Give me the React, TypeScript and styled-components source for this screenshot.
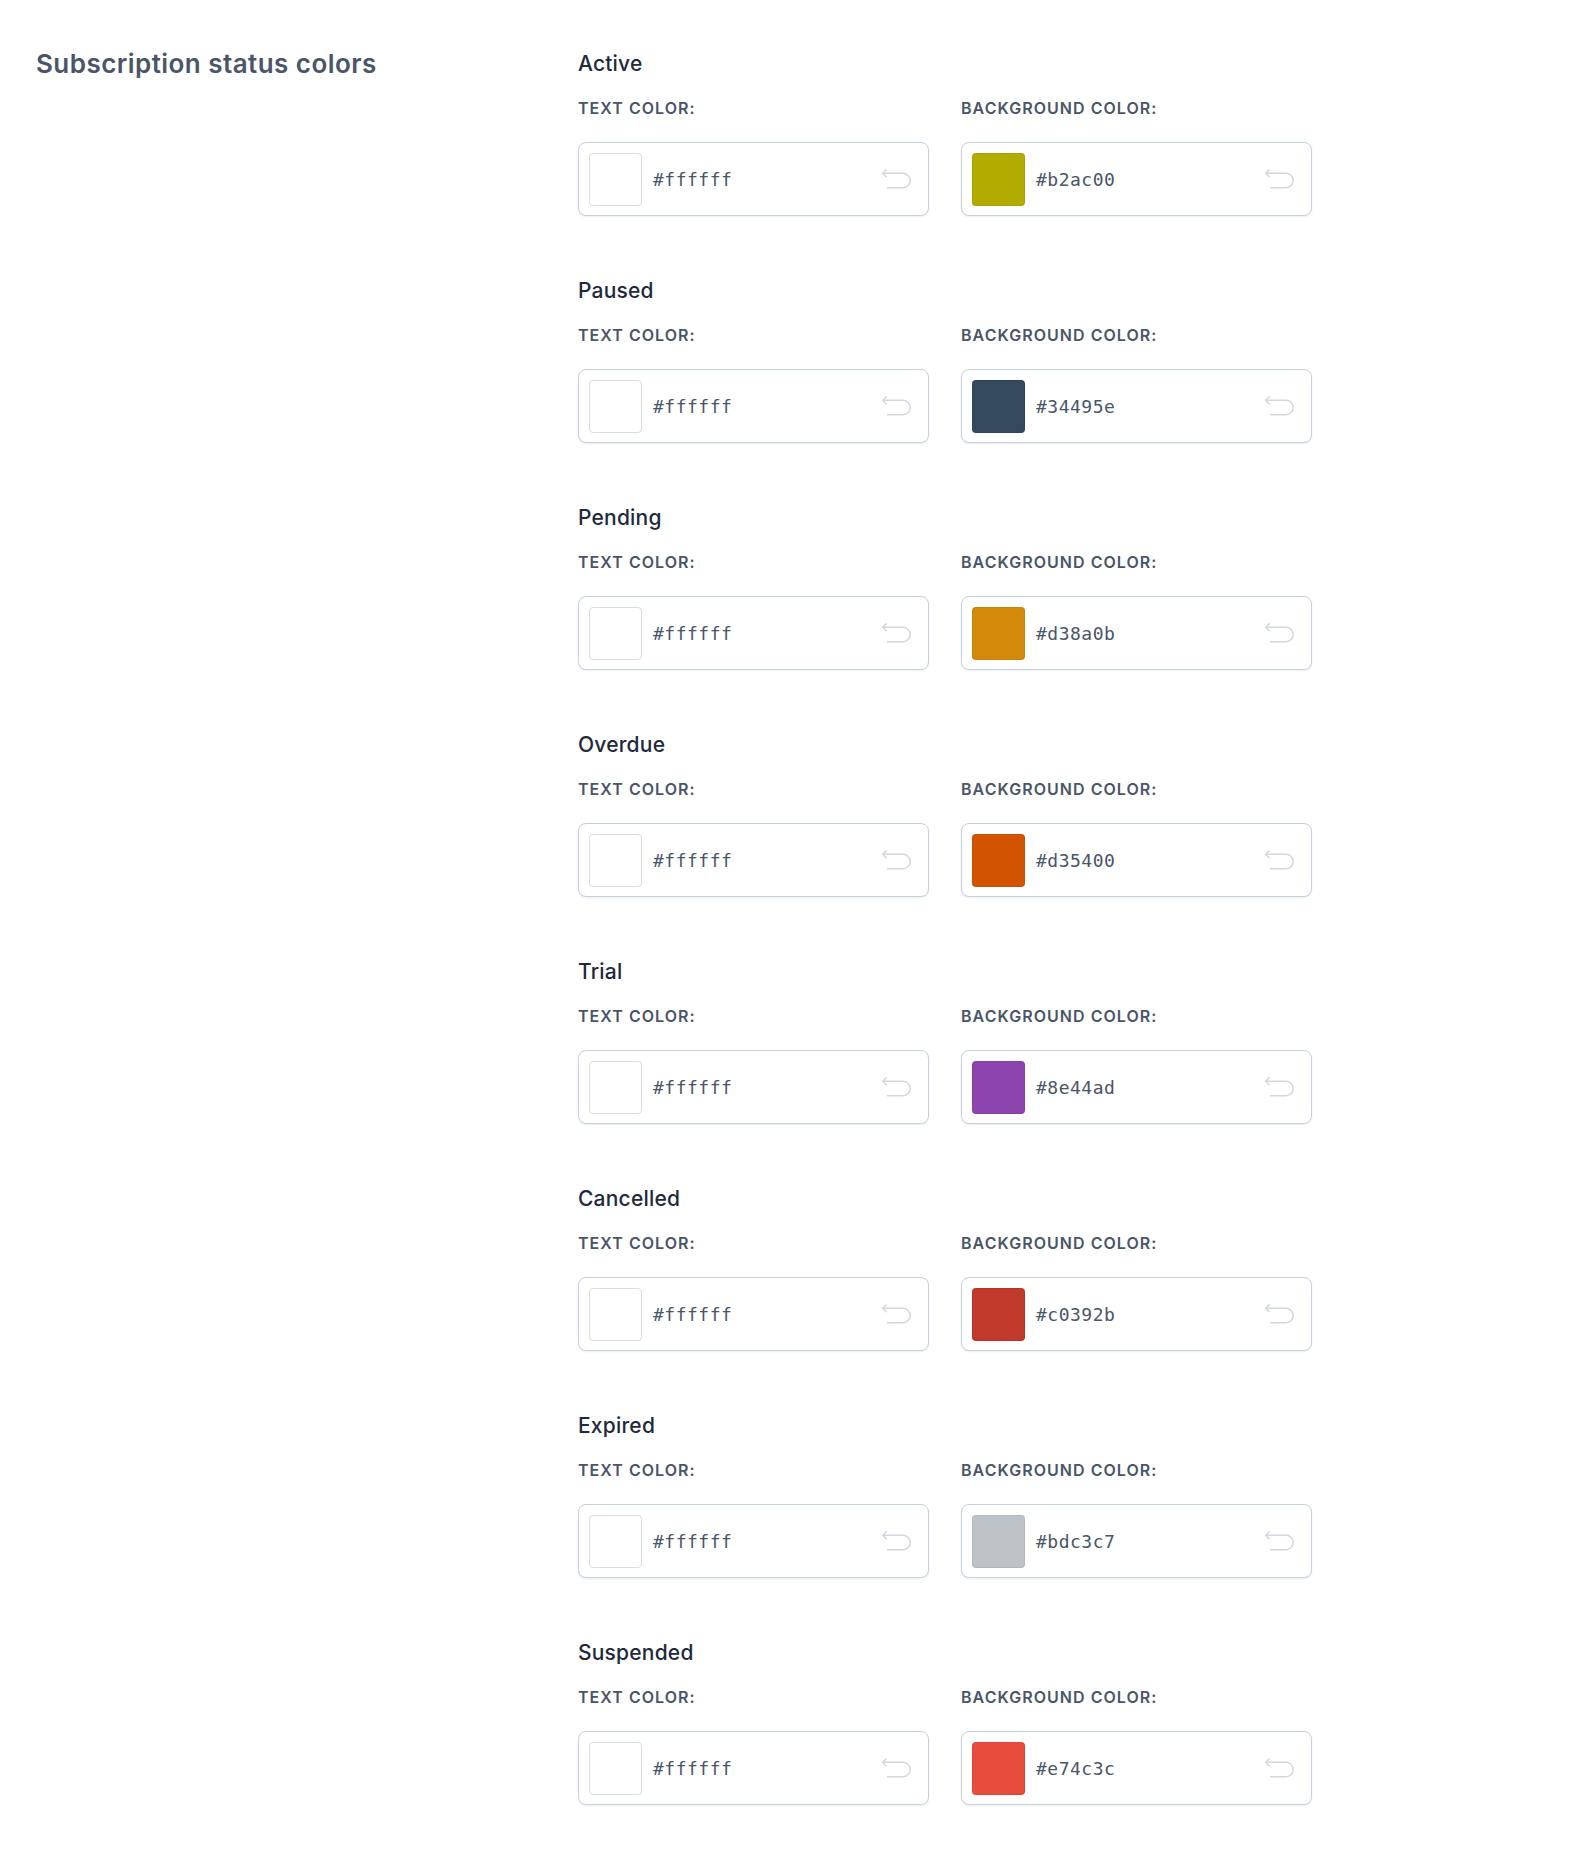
import React from "react";
import styled, { createGlobalStyle } from "styled-components";

const GlobalStyle = createGlobalStyle`
  html, body { margin: 0; padding: 0; background: #ffffff; }
  body { font-family: Inter, "Noto Sans", "Liberation Sans", sans-serif; -webkit-font-smoothing: antialiased; }
  * { box-sizing: border-box; }
`;

const Page = styled.div`
  display: grid;
  grid-template-columns: 542px 1fr;
  padding: 50px 0 0 36px;
  min-height: 1860px;
`;

const Heading = styled.h2`
  margin: 0;
  font-size: 26px;
  line-height: 28px;
  font-weight: 600;
  letter-spacing: 0.45px;
  color: #4a5568;
`;

const Sections = styled.div`
  display: flex;
  flex-direction: column;
  gap: 61px;
`;

const Section = styled.section`
  display: flex;
  flex-direction: column;
`;

const Title = styled.h3`
  margin: 0 0 18px;
  font-size: 21px;
  line-height: 28px;
  font-weight: 500;
  letter-spacing: 0.2px;
  color: #1e293b;
`;

const FieldGrid = styled.div`
  display: grid;
  grid-template-columns: 351px 351px;
  column-gap: 32px;
`;

const Field = styled.div`
  display: flex;
  flex-direction: column;
  gap: 22px;
`;

const Label = styled.label`
  font-size: 16px;
  line-height: 24px;
  font-weight: 600;
  letter-spacing: 0.065em;
  text-transform: uppercase;
  color: #4a5568;
`;

const Picker = styled.div`
  display: flex;
  align-items: center;
  height: 74px;
  padding: 0 16px 0 10px;
  border: 1px solid #c6d0de;
  border-radius: 8px;
  background: #fff;
  box-shadow: 0 1px 2px rgba(15, 23, 42, 0.08);
`;

const Swatch = styled.span<{ $color: string }>`
  flex: none;
  width: 53px;
  height: 53px;
  border-radius: 4px;
  background: ${(p) => p.$color};
  border: 1px solid ${(p) => (p.$color === "#ffffff" ? "#dcdcdc" : "rgba(0,0,0,0.06)")};
`;

const Hex = styled.span`
  margin-left: 11px;
  flex: 1;
  font-family: "DejaVu Sans Mono", "Liberation Mono", monospace;
  font-size: 18px;
  letter-spacing: 0.5px;
  color: #4a5568;
`;

const ResetButton = styled.button`
  flex: none;
  display: flex;
  padding: 0;
  border: 0;
  background: transparent;
  cursor: pointer;
`;

const UndoIcon = () => (
  <svg width="32" height="26" viewBox="0 0 32 26" fill="none">
    <path
      d="M6.2 3.9 2.6 7.3l3.6 3.5M2.6 7.3h20.4a7.2 7.2 0 0 1 0 14.4H7.6"
      stroke="#d4d7dc"
      strokeWidth="1.5"
      strokeLinecap="round"
      strokeLinejoin="round"
    />
  </svg>
);

type Status = { name: string; bg: string };

const statuses: Status[] = [
  { name: "Active", bg: "#b2ac00" },
  { name: "Paused", bg: "#34495e" },
  { name: "Pending", bg: "#d38a0b" },
  { name: "Overdue", bg: "#d35400" },
  { name: "Trial", bg: "#8e44ad" },
  { name: "Cancelled", bg: "#c0392b" },
  { name: "Expired", bg: "#bdc3c7" },
  { name: "Suspended", bg: "#e74c3c" },
];

const ColorField = ({ label, value }: { label: string; value: string }) => (
  <Field>
    <Label>{label}</Label>
    <Picker>
      <Swatch $color={value} />
      <Hex>{value}</Hex>
      <ResetButton aria-label="Reset">
        <UndoIcon />
      </ResetButton>
    </Picker>
  </Field>
);

export default function App() {
  return (
    <>
      <GlobalStyle />
      <Page>
        <Heading>Subscription status colors</Heading>
        <Sections>
          {statuses.map((s) => (
            <Section key={s.name}>
              <Title>{s.name}</Title>
              <FieldGrid>
                <ColorField label="Text color:" value="#ffffff" />
                <ColorField label="Background color:" value={s.bg} />
              </FieldGrid>
            </Section>
          ))}
        </Sections>
      </Page>
    </>
  );
}
